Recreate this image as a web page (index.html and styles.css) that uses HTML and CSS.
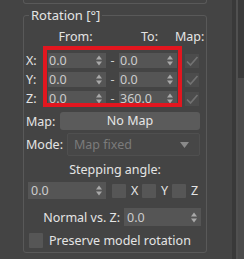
FILE: index.html
```html
<!DOCTYPE html>
<html lang="en">
<head>
  <meta charset="UTF-8">
  <title>Rotation</title>
  <link rel="stylesheet" href="styles.css">
</head>
<body>
  <div class="app">
    <div class="panel">
      <div class="prev"></div>

      <!-- Rotation group -->
      <fieldset class="group">
        <legend>Rotation [°]</legend>

        <div class="grid head">
          <span class="h-from">From:</span>
          <span class="h-to">To:</span>
          <span class="h-map">Map:</span>
        </div>

        <div class="axes">
          <div class="grid axis">
            <span class="lbl">X:</span>
            <div class="spin">0.0<svg class="arr" width="6" height="11" viewBox="0 0 6 11"><path d="M0 4.5L3 0.5L6 4.5ZM0 6.5L3 10.5L6 6.5Z"/></svg></div>
            <span class="dash">-</span>
            <div class="spin">0.0<svg class="arr" width="6" height="11" viewBox="0 0 6 11"><path d="M0 4.5L3 0.5L6 4.5ZM0 6.5L3 10.5L6 6.5Z"/></svg></div>
            <span></span>
            <div class="check"><svg width="14" height="14" viewBox="0 0 14 14"><path d="M2 7.5L5.5 11L12.5 3"/></svg></div>
          </div>
          <div class="grid axis">
            <span class="lbl">Y:</span>
            <div class="spin">0.0<svg class="arr" width="6" height="11" viewBox="0 0 6 11"><path d="M0 4.5L3 0.5L6 4.5ZM0 6.5L3 10.5L6 6.5Z"/></svg></div>
            <span class="dash">-</span>
            <div class="spin">0.0<svg class="arr" width="6" height="11" viewBox="0 0 6 11"><path d="M0 4.5L3 0.5L6 4.5ZM0 6.5L3 10.5L6 6.5Z"/></svg></div>
            <span></span>
            <div class="check"><svg width="14" height="14" viewBox="0 0 14 14"><path d="M2 7.5L5.5 11L12.5 3"/></svg></div>
          </div>
          <div class="grid axis">
            <span class="lbl">Z:</span>
            <div class="spin">0.0<svg class="arr" width="6" height="11" viewBox="0 0 6 11"><path d="M0 4.5L3 0.5L6 4.5ZM0 6.5L3 10.5L6 6.5Z"/></svg></div>
            <span class="dash">-</span>
            <div class="spin">360.0<svg class="arr" width="6" height="11" viewBox="0 0 6 11"><path d="M0 4.5L3 0.5L6 4.5ZM0 6.5L3 10.5L6 6.5Z"/></svg></div>
            <span></span>
            <div class="check"><svg width="14" height="14" viewBox="0 0 14 14"><path d="M2 7.5L5.5 11L12.5 3"/></svg></div>
          </div>
          <div class="highlight"></div>
        </div>

        <div class="row map-row">
          <span class="lbl map-lbl">Map:</span>
          <div class="btn">No Map</div>
        </div>

        <div class="row mode-row">
          <span class="lbl mode-lbl">Mode:</span>
          <div class="select">Map fixed<svg width="9" height="6" viewBox="0 0 9 6"><path d="M0 0H9L4.5 6Z"/></svg></div>
        </div>

        <div class="caption">Stepping angle:</div>

        <div class="row step-row">
          <div class="spin step">0.0<svg class="arr" width="6" height="11" viewBox="0 0 6 11"><path d="M0 4.5L3 0.5L6 4.5ZM0 6.5L3 10.5L6 6.5Z"/></svg></div>
          <span class="box"></span><span class="axl">X</span>
          <span class="box"></span><span class="axl">Y</span>
          <span class="box"></span><span class="axl">Z</span>
        </div>

        <div class="row normal-row">
          <span>Normal vs. Z:</span>
          <div class="spin normal">0.0<svg class="arr" width="6" height="11" viewBox="0 0 6 11"><path d="M0 4.5L3 0.5L6 4.5ZM0 6.5L3 10.5L6 6.5Z"/></svg></div>
        </div>

        <div class="row keep-row">
          <span class="box"></span>
          <span>Preserve model rotation</span>
        </div>
      </fieldset>
    </div>
    <div class="divider"></div>
    <div class="scrollbar"><div class="thumb"></div></div>
  </div>
</body>
</html>
```

FILE: styles.css
```css
* {
  margin: 0;
  padding: 0;
  box-sizing: border-box;
}

body {
  background: #444444;
  color: #e4e4e4;
  font-family: "Noto Sans", sans-serif;
  font-size: 12.5px;
  width: 244px;
  height: 259px;
  overflow: hidden;
}

.app {
  display: flex;
  height: 259px;
}

.panel {
  width: 232px;
}

.divider {
  width: 4px;
  background: #393939;
}

.scrollbar {
  width: 8px;
  background: #4b4b4b;
  border-left: 2px solid #505050;
}

.thumb {
  height: 78px;
  background: #3a3a3a;
}

.prev {
  margin-left: 23px;
  width: 184px;
  height: 4px;
  border: 1px solid #595959;
  border-top: 0;
  border-radius: 0 0 3px 3px;
}

.group {
  margin: 3px 0 0 23px;
  width: 184px;
  border: 1px solid #595959;
  border-radius: 3px;
  padding: 0 0 3px 0;
}

.group legend {
  margin-left: 5px;
  padding: 0 2px;
  line-height: 16px;
  font-size: 13px;
}

.grid {
  display: grid;
  grid-template-columns: 24px 58px 13px 58px 8px 14px;
  align-items: center;
}

.head {
  margin-top: 6px;
  height: 16px;
  line-height: 16px;
}

.h-from {
  grid-column: 2;
  justify-self: center;
  margin-right: 3px;
}

.h-to {
  grid-column: 4;
  justify-self: center;
  margin-left: 3px;
}

.h-map {
  grid-column: 5 / 7;
  margin-left: -2px;
  white-space: nowrap;
}

.axes {
  position: relative;
  margin-top: 7px;
  display: flex;
  flex-direction: column;
  gap: 4px;
}

.axis {
  height: 15px;
}

.lbl {
  padding-left: 2px;
}

.spin {
  display: flex;
  align-items: center;
  justify-content: space-between;
  height: 15px;
  padding: 0 4px 0 1px;
  background: #555555;
  color: #cccccc;
  line-height: 15px;
}

.arr {
  fill: #a9a9a9;
}

.dash {
  text-align: center;
  color: #cfcfcf;
}

.check {
  width: 14px;
  height: 14px;
  background: #4c4c4c;
}

.check svg {
  display: block;
  fill: none;
  stroke: #727272;
  stroke-width: 1.7;
}

.highlight {
  position: absolute;
  left: 19px;
  top: -6px;
  width: 139px;
  height: 61px;
  border: 4px solid #e2161f;
}

.row {
  display: flex;
  align-items: center;
}

.map-row {
  margin-top: 7px;
}

.map-lbl {
  width: 36px;
}

.btn {
  width: 140px;
  height: 18px;
  line-height: 18px;
  background: #5b5b5b;
  border-radius: 3px;
  text-align: center;
  color: #e6e6e6;
}

.mode-row {
  margin-top: 3px;
}

.mode-lbl {
  width: 43px;
}

.select {
  display: flex;
  align-items: center;
  justify-content: space-between;
  width: 133px;
  height: 23px;
  padding: 0 10px 0 6px;
  background: #474747;
  border: 1px solid #4f4f4f;
  border-radius: 2px;
  color: #7b7b7b;
}

.select svg {
  fill: #8a8a8a;
}

.caption {
  margin-top: 5px;
  height: 18px;
  line-height: 18px;
  text-align: center;
}

.step-row {
  margin-top: 3px;
  padding-left: 4px;
}

.step {
  width: 78px;
  height: 17px;
  padding-left: 3px;
}

.box {
  width: 14px;
  height: 14px;
  background: #565656;
  border-radius: 1px;
}

.step-row .box {
  margin-left: 2px;
}

.step-row .step + .box {
  margin-left: 6px;
}

.axl {
  margin-left: 5px;
  width: 9px;
}

.normal-row {
  margin-top: 9px;
  justify-content: flex-end;
  padding-right: 5px;
  gap: 4px;
}

.normal {
  width: 77px;
  height: 18px;
  padding-left: 3px;
}

.keep-row {
  margin-top: 6px;
  padding-left: 5px;
  gap: 6px;
}

.keep-row .box {
  height: 15px;
}
```
